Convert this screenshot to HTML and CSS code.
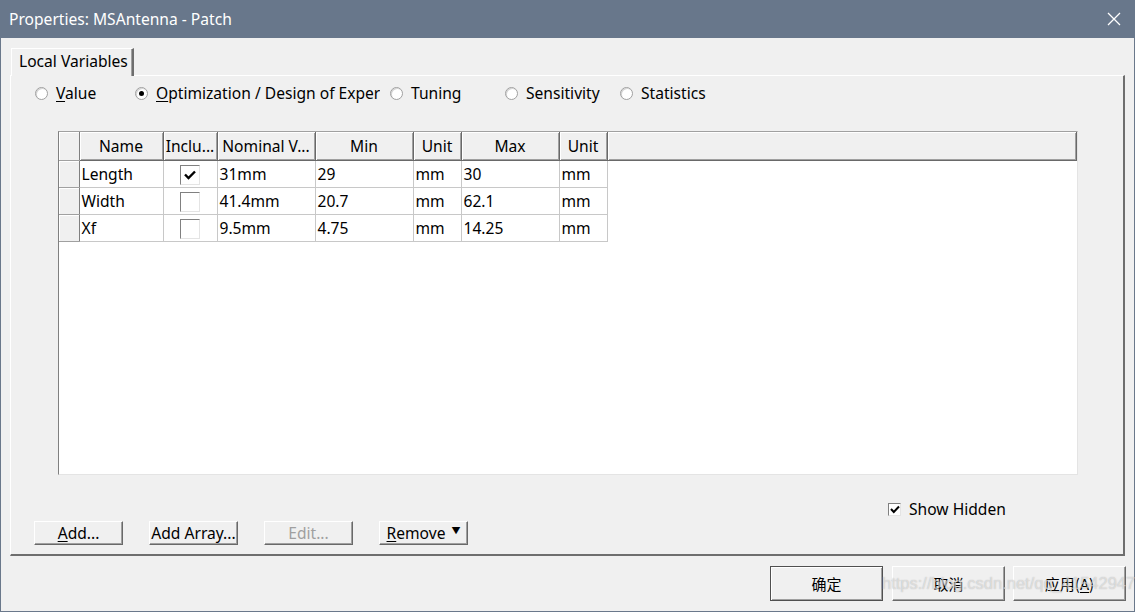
FILE: index.html
```html
<!DOCTYPE html>
<html>
<head>
<meta charset="utf-8">
<link rel="stylesheet" href="styles.css">
</head>
<body>
<div class="window">
  <div class="titlebar">
    <span class="title">Properties: MSAntenna - Patch</span>
    <svg class="close" width="14" height="14" viewBox="0 0 14 14"><path d="M1 1L13 13M13 1L1 13" stroke="#fff" stroke-width="1.3" fill="none"/></svg>
  </div>
  <div class="content">
    <div class="tabs"><div class="tab">Local Variables</div></div>
    <div class="panel">
      <div class="radios">
        <label class="radio r1"><span class="rb"></span><span><u>V</u>alue</span></label>
        <label class="radio r2"><span class="rb on"></span><span class="clip w222"><u>O</u>ptimization / Design of Exper</span></label>
        <label class="radio r3"><span class="rb"></span><span>Tuning</span></label>
        <label class="radio r4"><span class="rb"></span><span>Sensitivity</span></label>
        <label class="radio r5"><span class="rb"></span><span>Statistics</span></label>
      </div>
      <div class="grid">
        <table>
          <colgroup>
            <col class="c-rh"><col class="c-name"><col class="c-inc"><col class="c-nom"><col class="c-min"><col class="c-unit"><col class="c-max"><col class="c-unit"><col>
          </colgroup>
          <thead>
            <tr><th class="rh"></th><th>Name</th><th>Inclu...</th><th>Nominal V...</th><th>Min</th><th>Unit</th><th>Max</th><th>Unit</th><th class="fill"></th></tr>
          </thead>
          <tbody>
            <tr><td class="rh"></td><td>Length</td><td class="cc"><span class="cb"><svg width="12" height="10" viewBox="0 0 12 10"><path d="M1 4.5L4.5 8L11 1.5" stroke="#000" stroke-width="2.4" fill="none"/></svg></span></td><td>31mm</td><td>29</td><td>mm</td><td>30</td><td>mm</td><td class="empty"></td></tr>
            <tr><td class="rh"></td><td>Width</td><td class="cc"><span class="cb"></span></td><td>41.4mm</td><td>20.7</td><td>mm</td><td>62.1</td><td>mm</td><td class="empty"></td></tr>
            <tr><td class="rh"></td><td>Xf</td><td class="cc"><span class="cb"></span></td><td>9.5mm</td><td>4.75</td><td>mm</td><td>14.25</td><td>mm</td><td class="empty"></td></tr>
          </tbody>
        </table>
      </div>
      <div class="showhidden">
        <span class="cb small"><svg width="10" height="9" viewBox="0 0 10 9"><path d="M1 4L3.8 7L9 1.5" stroke="#000" stroke-width="2" fill="none"/></svg></span>
        <span>Show Hidden</span>
      </div>
      <div class="btnrow">
        <button class="btn"><u>A</u>dd...</button>
        <button class="btn">Add Array...</button>
        <button class="btn disabled">Edit...</button>
        <button class="btn"><u>R</u>emove <span class="tri">&#9660;</span></button>
      </div>
    </div>
    <div class="footer">
      <button class="dbtn default b1">确定</button>
      <button class="dbtn b2">取消</button>
      <button class="dbtn b3">应用(<u>A</u>)</button>
    </div>
    <div class="watermark">https://blog.csdn.net/qq_41542947</div>
  </div>
</div>
</body>
</html>
```
FILE: styles.css
```css
* { box-sizing: border-box; }
html, body { margin: 0; padding: 0; }
body {
  width: 1135px; height: 612px; overflow: hidden;
  background: #f0f0f0;
  font-family: "Noto Sans", "Noto Sans CJK SC", sans-serif;
  font-size: 15.6px; color: #000;
}
.window {
  width: 1135px; height: 612px;
  border: 1px solid #6a788b; border-top: none;
  display: flex; flex-direction: column;
}
.titlebar {
  height: 38px; background: #68778b; color: #fff;
  display: flex; align-items: center; justify-content: space-between;
  padding: 0 14px 0 9px; margin: 0 -1px;
  font-size: 15.6px;
}
.content { position: relative; flex: 1; padding: 10px 9px 0 9px; }
.tabs { display: flex; height: 27px; padding-left: 1px; }
.tab {
  width: 123px; height: 28px; background: #f0f0f0; position: relative; z-index: 1;
  border-top: 1px solid #fff; border-left: 1px solid #fff; border-right: 2px solid #6e6e6e;
  padding: 1px 0 0 7px; line-height: 22px; white-space: nowrap;
  box-shadow: inset -1px 0 #a0a0a0;
}
.panel {
  width: 1115px; height: 481px;
  border-top: 1px solid #fff; border-left: 1px solid #fff;
  border-right: 2px solid #6e6e6e; border-bottom: 2px solid #6e6e6e;
  position: relative;
  display: flex; flex-direction: column;
  padding: 7px 0 0 0;
}
.radios { display: flex; height: 20px; align-items: center; position: relative; }
.radio { display: flex; align-items: center; gap: 8px; position: absolute; top: 0; height: 20px; white-space: nowrap; }
.r1 { left: 24px; } .r2 { left: 124px; } .r3 { left: 379px; } .r4 { left: 494px; } .r5 { left: 609px; }
.clip { overflow: hidden; display: inline-block; }
.w222 { width: 224px; }
.rb {
  width: 13px; height: 13px; border-radius: 50%;
  background: #fff; border: 1px solid #a0a0a0;
  box-shadow: inset 1px 1px 0 #d4d4d4;
  position: relative; flex: none;
}
.rb.on::after {
  content: ""; position: absolute; left: 3px; top: 3px; width: 5px; height: 5px; border-radius: 50%; background: #000;
}
u { text-decoration: underline; text-underline-offset: 2px; }
.grid {
  margin: 28px 0 0 47px;
  width: 1020px; height: 344px; background: #fff;
  border-left: 1px solid #808080; border-top: 1px solid #a0a0a0;
  border-right: 1px solid #e4e4e4; border-bottom: 1px solid #e4e4e4;
}
table { border-collapse: collapse; table-layout: fixed; width: 100%; }
.c-rh { width: 20px; } .c-name { width: 84px; } .c-inc { width: 54px; } .c-nom { width: 98px; }
.c-min { width: 98px; } .c-unit { width: 48px; } .c-max { width: 98px; }
th {
  height: 28px; background: #f0f0f0; font-weight: normal; text-align: center;
  padding: 0 1px; white-space: nowrap; overflow: hidden;
  border-right: 1px solid #696969; border-bottom: 1px solid #696969;
  box-shadow: inset 1px 1px 0 #fff, inset -1px -1px 0 #a0a0a0;
}
td {
  height: 27px; padding: 0 2px; white-space: nowrap;
  border-right: 1px solid #c8c8c8; border-bottom: 1px solid #c8c8c8;
}
td.rh, th.rh {
  background: #f0f0f0; border-right: 1px solid #808080; border-bottom: 1px solid #a0a0a0;
  box-shadow: inset 1px 1px 0 #fff;
}
td.empty { border: none; }
td.cc { text-align: center; }
.cb {
  display: inline-flex; align-items: center; justify-content: center;
  width: 20px; height: 20px; background: #fff; vertical-align: middle;
  border-top: 1px solid #808080; border-left: 1px solid #808080;
  border-right: 1px solid #e4e4e4; border-bottom: 1px solid #e4e4e4;
}
.cb.small { width: 13px; height: 13px; }
.showhidden {
  position: absolute; left: 877px; top: 423px;
  display: flex; align-items: center; gap: 8px; height: 20px;
}
.btnrow { display: flex; gap: 26px; margin: 46px 0 0 23px; }
.btn {
  width: 89px; height: 24px; padding: 0;
  font-family: inherit; font-size: 15.6px; color: #000;
  background: #f0f0f0;
  border-top: 1px solid #fff; border-left: 1px solid #fff;
  border-right: 1px solid #696969; border-bottom: 1px solid #696969;
  box-shadow: inset -1px -1px 0 #a0a0a0;
  display: flex; align-items: center; justify-content: center; white-space: nowrap;
}
.btn.disabled { color: #a0a0a0; }
.tri { font-size: 9px; margin-left: 6px; position: relative; top: -3px; }
.footer { display: flex; justify-content: flex-end; padding: 10px 0 0 0; }
.dbtn {
  width: 113px; height: 35px; padding: 0;
  font-family: "Noto Sans CJK SC", "Noto Sans", sans-serif; font-size: 15px; color: #000;
  background: #f0f0f0;
  border-top: 1px solid #fff; border-left: 1px solid #fff;
  border-right: 1px solid #696969; border-bottom: 1px solid #696969;
  box-shadow: inset -1px -1px 0 #a0a0a0;
}
.b1 { width: 113px; margin-right: 9px; }
.b2 { width: 113px; margin-right: 8px; }
.b3 { width: 113px; margin-right: -1px; }
.dbtn.default { border: 1px solid #505050; box-shadow: inset 1px 1px 0 #fff, inset -1px -1px 0 #a0a0a0; }
.watermark {
  position: absolute; left: 881px; top: 536px;
  font-family: "Liberation Sans", sans-serif; font-size: 16.5px; letter-spacing: 0;
  color: rgba(255,255,255,0.5);
  text-shadow: 0 0 1px rgba(110,110,110,0.5);
  white-space: nowrap; pointer-events: none;
}
```
